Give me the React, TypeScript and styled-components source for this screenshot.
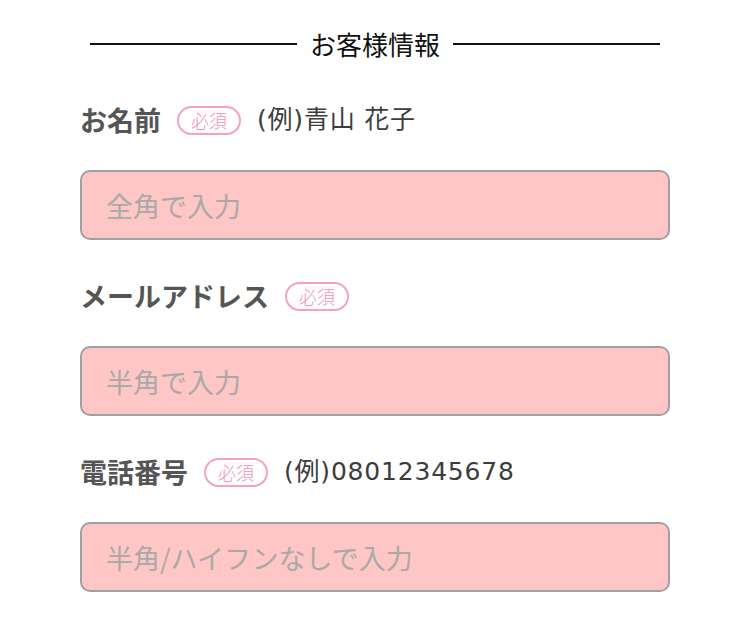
import styled, { createGlobalStyle } from "styled-components";

const GlobalStyle = createGlobalStyle`
    html, body {
        margin: 0;
        padding: 0;
        background: #ffffff;
    }
    body {
        font-family: "Noto Sans CJK JP", "Noto Sans", sans-serif;
    }
`;

type Field = {
    label: string,
    example?: string,
    placeholder: string,
    type: string
}

const fields: Field[] = [
    { label: "お名前", example: "(例)青山 花子", placeholder: "全角で入力", type: "text" },
    { label: "メールアドレス", placeholder: "半角で入力", type: "email" },
    { label: "電話番号", example: "(例)08012345678", placeholder: "半角/ハイフンなしで入力", type: "tel" },
];

const App = () => {
    return (
        <>
            <GlobalStyle />
            <Form>
                <Heading>お客様情報</Heading>
                {fields.map((field) => (
                    <FieldBlock key={field.label}>
                        <LabelRow>
                            <Label>{field.label}</Label>
                            <Badge>必須</Badge>
                            {field.example && <Example>{field.example}</Example>}
                        </LabelRow>
                        <Input type={field.type} placeholder={field.placeholder} />
                    </FieldBlock>
                ))}
            </Form>
        </>
    );
};

const Form = styled.form`
    width: 590px;
    margin: 0 auto;
    padding-top: 28px;
    display: flex;
    flex-direction: column;
`;

const Heading = styled.h2`
    margin: 0 10px 43px;
    display: flex;
    align-items: center;
    gap: 13px;
    font-size: 26px;
    font-weight: 400;
    line-height: 32px;
    color: #111;
    &::before, &::after {
        content: "";
        flex: 1;
        height: 2px;
        background: #111;
    }
`;

const FieldBlock = styled.div`
    display: flex;
    flex-direction: column;
    margin-bottom: 39px;
`;

const LabelRow = styled.div`
    display: flex;
    align-items: center;
    gap: 16px;
    height: 34px;
    margin-bottom: 33px;
`;

const Label = styled.label`
    font-size: 27px;
    font-weight: 700;
    color: #555;
    line-height: 34px;
`;

const Badge = styled.span`
    display: inline-flex;
    align-items: center;
    justify-content: center;
    box-sizing: border-box;
    width: 64px;
    height: 29px;
    border: 2px solid #f5a3bd;
    border-radius: 15px;
    font-size: 18px;
    font-weight: 300;
    color: #f293b3;
`;

const Example = styled.span`
    font-family: "DejaVu Sans", "Noto Sans CJK JP", sans-serif;
    font-size: 25px;
    letter-spacing: 0.8px;
    color: #3c3c3c;
    line-height: 34px;
`;

const Input = styled.input`
    box-sizing: border-box;
    width: 100%;
    height: 70px;
    padding: 0 24px;
    border: 2px solid #a0a0a0;
    border-radius: 10px;
    background: #ffc6c6;
    font-family: "Noto Sans CJK JP", "Noto Sans", sans-serif;
    font-size: 27px;
    color: #333;
    outline: none;
    &::placeholder {
        color: #a9a9a9;
    }
`;

export default App;
